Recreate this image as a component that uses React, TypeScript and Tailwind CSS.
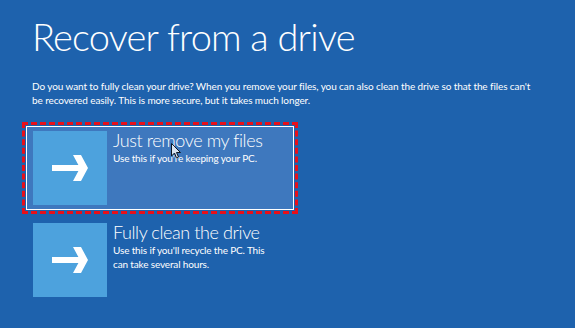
const options = [
  {
    title: 'Just remove my files',
    body: "Use this if you're keeping your PC.",
    selected: true,
  },
  {
    title: 'Fully clean the drive',
    body: "Use this if you'll recycle the PC. This can take several hours.",
    selected: false,
  },
]

function Arrow() {
  return (
    <svg width="36" height="26" viewBox="0 0 36 26" fill="white">
      <rect x="0" y="10" width="30" height="6" />
      <polygon points="21,0 29,0 36,13 29,26 21,26 28,13" />
    </svg>
  )
}

function Cursor() {
  return (
    <svg
      width="10"
      height="16"
      viewBox="0 0 10 16"
      className="absolute left-[171px] top-[143px] opacity-80"
    >
      <path d="M0.5 0.5 V13 L3.5 10 L5.5 15 L7.5 14 L5.5 9.5 H9.5 Z" fill="white" stroke="black" strokeWidth="1" />
    </svg>
  )
}

export default function App() {
  return (
    <div className="relative w-[575px] h-[328px] overflow-hidden bg-[#1e62ad] px-[22px] font-['Lato',sans-serif] text-white">
      <h1 className="mt-[14px] pl-[10px] text-[38px] leading-[44px] font-light tracking-[-0.8px]">
        Recover from a drive
      </h1>
      <p className="mt-[22px] pl-[10px] w-[515px] text-[10px] leading-[13.5px] tracking-[-0.1px]">
        Do you want to fully clean your drive? When you remove your files, you can also clean the drive so that the files
        can't be recovered easily. This is more secure, but it takes much longer.
      </p>
      <div className="mt-[15px] flex flex-col">
        {options.map((o) => (
          <div
            key={o.title}
            className={
              o.selected
                ? 'w-[276px] border-[3px] border-dashed border-[#e8101a] p-px'
                : 'w-[276px] border-[3px] border-transparent p-px'
            }
          >
            <div
              className={
                o.selected
                  ? 'flex gap-[6px] border border-white bg-[#3e78be] py-[4px] pl-[6px]'
                  : 'flex gap-[6px] border border-transparent py-[4px] pl-[6px]'
              }
            >
              <div className="flex h-[74px] w-[74px] shrink-0 items-center justify-center bg-[#4da2dd]">
                <Arrow />
              </div>
              <div className="-mt-[2px] flex flex-col">
                <div className="text-[18px] leading-[22px] font-light tracking-[-0.4px]">{o.title}</div>
                <div className="w-[158px] text-[10px] leading-[14px] tracking-[-0.15px]">{o.body}</div>
              </div>
            </div>
          </div>
        ))}
      </div>
      <Cursor />
    </div>
  )
}
